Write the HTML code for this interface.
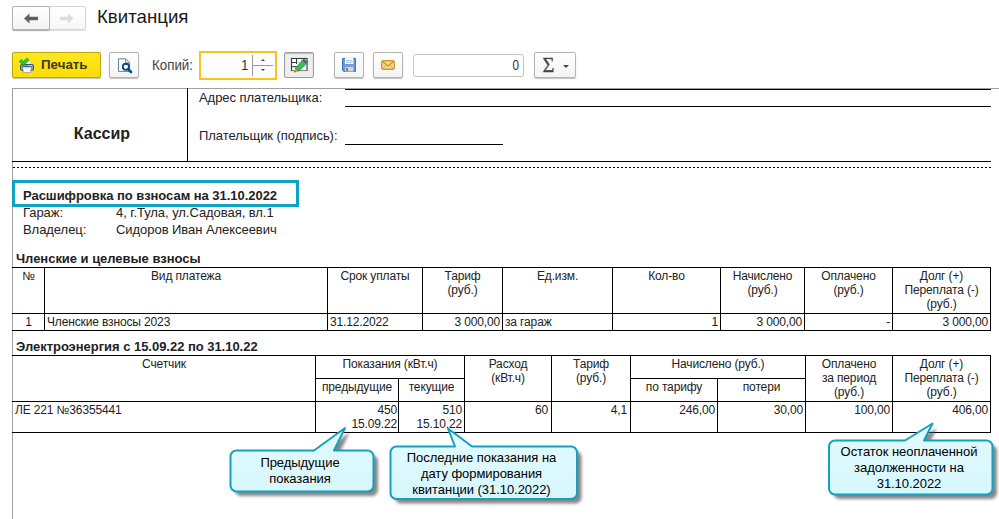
<!DOCTYPE html>
<html lang="ru">
<head>
<meta charset="utf-8">
<title>Квитанция</title>
<style>
*{box-sizing:border-box;margin:0;padding:0}
html,body{width:999px;height:519px;overflow:hidden;background:#fff}
body{position:relative;font-family:"Liberation Sans",Arial,sans-serif;color:#222;font-size:12px}
.abs{position:absolute}
.btn{position:absolute;border:1px solid #b4b4b4;border-radius:2px;background:linear-gradient(#ffffff,#f3f3f3);box-shadow:0 1px 1px rgba(0,0,0,.25)}
.title{position:absolute;left:97px;top:5px;font-size:18.67px;line-height:24px;color:#1a1a1a}
.t{position:absolute;white-space:nowrap;line-height:14px;font-size:12px;color:#222;letter-spacing:-0.14px}
.b{font-weight:bold}
.hl{position:absolute;background:#000;height:1px}
.vl{position:absolute;background:#000;width:1px}
.c{text-align:center}
.r{text-align:right}
.call{position:absolute;font-size:13px;line-height:16px;text-align:center;color:#000;letter-spacing:-0.05px}
</style>
</head>
<body>
<!-- nav buttons -->
<div class="btn" style="left:12px;top:6px;width:74px;height:24px;background:linear-gradient(#fff,#f7f7f7);border-color:#d4d4d4;box-shadow:0 1px 1px rgba(0,0,0,.12)"></div>
<div class="btn" style="left:12px;top:6px;width:38px;height:24px;"></div>
<svg class="abs" style="left:12px;top:6px" width="74" height="24" viewBox="0 0 74 24">
<path d="M12 12.5 L17.5 7.5 V10.8 H26 V14.2 H17.5 V17.5 Z" fill="#5f5f5f"/>
<path d="M61.5 12.5 L56 7.500 V10.8 H48 V14.2 H56 V17.5 Z" fill="#dcdcdc"/>
</svg>
<div class="title">Квитанция</div>

<!-- toolbar -->
<div class="btn" style="left:12px;top:52px;width:89px;height:26px;background:linear-gradient(#ffe720,#fbdc05);border-color:#bfa608"></div>
<svg class="abs" style="left:14px;top:52px" width="30" height="26" viewBox="14 52 30 26">
<path d="M25.800 64.500 V61.200 H29.300 L30.500 62.400 V64.500 Z" fill="#fff" stroke="#c9ccd6" stroke-width=".5"/>
<rect x="20.500" y="64.500" width="13" height="5.800" rx="1.300" fill="#7f9fcb" stroke="#34557f" stroke-width="1"/>
<path d="M22 66.300 H32" stroke="#3a557a" stroke-width=".9"/>
<rect x="28.800" y="65" width="1" height=".9" fill="#fff"/><rect x="31" y="65" width="1" height=".9" fill="#fff"/>
<rect x="23.300" y="67" width="7.400" height="5.400" fill="#fff"/>
<rect x="23.300" y="67" width="7.400" height="1.200" fill="#c3cdee"/>
<path d="M23.300 70.500 V72.400 H30.700 V70.500" fill="none" stroke="#6e87ad" stroke-width=".6"/>
<path d="M20 60.300 L23.800 63.300 L28 58.800" stroke="#1f9a14" stroke-width="3.400" fill="none" stroke-linejoin="miter"/>
<path d="M20 60.300 L23.800 63.300 L28 58.800" stroke="#35cf22" stroke-width="2" fill="none" stroke-linejoin="miter"/>
</svg>
<div class="t b" style="left:41px;top:57px;font-size:13.33px;line-height:16px;color:#3c3a1c;letter-spacing:0">Печать</div>

<div class="btn" style="left:109px;top:52px;width:30px;height:26px"></div>
<svg class="abs" style="left:114px;top:55px" width="22" height="20" viewBox="114 55 22 20">
<path d="M118.500 58.800 H125.500 L129.500 62.800 V71.400 H118.500 Z" fill="#fff" stroke="#5a8797" stroke-width="1"/>
<path d="M125.500 58.800 V62.800 H129.500" fill="none" stroke="#5a8797" stroke-width=".8"/>
<circle cx="125.900" cy="66.800" r="3.100" fill="#fff" stroke="#114b80" stroke-width="1.900"/>
<path d="M128.200 69.200 L131 72" stroke="#114b80" stroke-width="2.600" stroke-linecap="round"/>
</svg>

<div class="t" style="left:152px;top:57px;font-size:13.33px;line-height:16px;color:#444;letter-spacing:0;transform:translateY(.5px) scaleY(1.05)">Копий:</div>

<div class="abs" style="left:199px;top:51px;width:78px;height:29px;border:2px solid #f7c31c;background:#fff"></div>
<div class="t" style="left:236.500px;top:57px;width:12px;font-size:13.33px;line-height:16px;text-align:right;color:#333;letter-spacing:0;transform:translateY(.5px) scaleY(1.05)">1</div>
<div class="abs" style="left:252px;top:55px;width:1px;height:21px;background:#999"></div>
<div class="abs" style="left:253px;top:65px;width:20px;height:1px;background:#999"></div>
<svg class="abs" style="left:258px;top:57px" width="10" height="16" viewBox="0 0 10 16">
<path d="M3 4 L5 2 L7 4 Z M3 12 L5 14 L7 12 Z" fill="#444"/>
</svg>

<div class="btn" style="left:284px;top:52px;width:30px;height:26px;background:#eeeeee;border-color:#9c9c9c;box-shadow:inset 0 1px 1px rgba(0,0,0,.22)"></div>
<svg class="abs" style="left:282px;top:50px" width="36" height="30" viewBox="282 50 36 30">
<rect x="291.500" y="58.500" width="15.500" height="12" fill="#fff" stroke="#3a3a3a" stroke-width="1.100"/>
<path d="M292 62.500 H307 M292 66.500 H307 M301.500 59 V70" stroke="#c4c4c4" stroke-width=".8"/>
<path d="M291.500 62.500 H297 M291.500 66.700 H297 M296.500 58.500 V64" stroke="#3a3a3a" stroke-width="1"/>
<path d="M292 70.500 H307 M307 64 V70.500" stroke="#8a8a8a" stroke-width="1"/>
<path d="M294.100 72.600 L295 68.500 L298.500 71.300 Z" fill="#e8a33a"/>
<path d="M294.100 72.600 L294.700 70.800 L295.900 71.800 Z" fill="#444"/>
<path d="M295 68.500 L302.300 60.400 L306.200 63.700 L298.500 71.300 Z" fill="#3dbb55" stroke="#23803a" stroke-width=".6"/>
<path d="M302.300 60.400 L303.900 58.700 L307.800 62 L306.200 63.700 Z" fill="#566878" stroke="#3e4d5a" stroke-width=".4"/>
</svg>

<div class="btn" style="left:334px;top:52px;width:30px;height:26px"></div>
<svg class="abs" style="left:340px;top:56px" width="18" height="18" viewBox="340 56 18 18">
<path d="M342.600 58.400 H355.400 V71.400 H343.600 L342.600 70.400 Z" fill="#6f9ddb" stroke="#3c69a8" stroke-width="1"/>
<rect x="345" y="58" width="8.300" height="6" fill="#fff"/>
<path d="M346 60.400 H352.300 M346 62.300 H352.300" stroke="#8fb5e6" stroke-width=".9"/>
<rect x="345" y="66.700" width="8.600" height="5" fill="#d6d6d6" stroke="#7e93b5" stroke-width=".5"/>
<rect x="346.400" y="68" width="1.500" height="3.200" fill="#3c69a8"/>
</svg>

<div class="btn" style="left:373px;top:52px;width:30px;height:26px"></div>
<svg class="abs" style="left:379px;top:58px" width="18" height="14" viewBox="379 58 18 14">
<rect x="381.700" y="60.700" width="12.600" height="8.500" rx="1.500" fill="#f8d895" stroke="#d49a2e" stroke-width="1.400"/>
<path d="M382.500 61.500 L388 66 L393.500 61.500" stroke="#c98c22" stroke-width="1.100" fill="none"/>
<path d="M382.500 68.600 L386.400 64.800 M393.500 68.600 L389.600 64.800" stroke="#d9a441" stroke-width=".9" fill="none"/>
</svg>

<div class="abs" style="left:413px;top:54px;width:111px;height:23px;border:1px solid #c4c4c4;border-radius:3px;background:#fff"></div>
<div class="t" style="left:499.500px;top:57px;width:19px;font-size:13.33px;line-height:16px;text-align:right;color:#333;letter-spacing:0;transform-origin:right center;transform:translateY(.5px) scale(.88,1.05)">0</div>

<div class="btn" style="left:534px;top:52px;width:42px;height:26px"></div>
<div class="t" style="left:542.5px;top:53px;font-size:20.5px;line-height:24px;color:#444;-webkit-text-stroke:.3px #444;font-family:'Liberation Serif',serif">Σ</div>
<svg class="abs" style="left:562px;top:64px" width="8" height="5" viewBox="0 0 8 5"><path d="M1 1 H7 L4 4 Z" fill="#444"/></svg>

<!-- document frame -->
<div class="abs" style="left:12px;top:88px;width:987px;height:1px;background:#a0a0a0"></div>
<div class="abs" style="left:12px;top:88px;width:1px;height:431px;background:#a0a0a0"></div>

<!-- cashier block -->
<div class="vl" style="left:187px;top:88px;height:74px"></div>
<div class="hl" style="left:12px;top:161px;width:979px"></div>
<div class="abs" style="left:13px;top:167px;width:978px;height:1px;background:repeating-linear-gradient(90deg,#000 0,#000 2px,#fff 2px,#fff 4px)"></div>
<div class="t b" style="left:15px;top:124px;width:174px;text-align:center;font-size:16px;line-height:20px;color:#222;letter-spacing:0">Кассир</div>
<div class="t" style="left:199px;top:90px;font-size:13px;line-height:15px;letter-spacing:-0.05px">Адрес плательщика:</div>
<div class="t" style="left:199px;top:128px;font-size:13px;line-height:15px;letter-spacing:-0.05px">Плательщик (подпись):</div>
<div class="hl" style="left:345px;top:89px;width:646px"></div>
<div class="hl" style="left:345px;top:106px;width:646px"></div>
<div class="hl" style="left:345px;top:144px;width:158px"></div>

<!-- decode block -->
<div class="abs" style="left:12px;top:180px;width:287px;height:27px;border:3px solid #10a2c2"></div>
<div class="t b" style="left:23px;top:188px;font-size:13px;line-height:16px;letter-spacing:-0.04px">Расшифровка по взносам на 31.10.2022</div>
<div class="t" style="left:23px;top:205px;font-size:13px;line-height:16px;letter-spacing:-0.05px">Гараж:</div>
<div class="t" style="left:116px;top:205px;font-size:13px;line-height:16px;letter-spacing:-0.05px">4, г.Тула, ул.Садовая, вл.1</div>
<div class="t" style="left:23px;top:222px;font-size:13px;line-height:16px;letter-spacing:-0.05px">Владелец:</div>
<div class="t" style="left:116px;top:222px;font-size:13px;line-height:16px;letter-spacing:-0.05px">Сидоров Иван Алексеевич</div>

<div class="t b" style="left:16px;top:251px;font-size:13px;line-height:16px;letter-spacing:-0.03px">Членские и целевые взносы</div>

<!-- table 1 -->
<div class="hl" style="left:12px;top:267px;width:979px"></div>
<div class="hl" style="left:12px;top:313px;width:979px"></div>
<div class="hl" style="left:12px;top:330px;width:979px"></div>
<div class="vl" style="left:44px;top:267px;height:64px"></div>
<div class="vl" style="left:327px;top:267px;height:64px"></div>
<div class="vl" style="left:422px;top:267px;height:64px"></div>
<div class="vl" style="left:502px;top:267px;height:64px"></div>
<div class="vl" style="left:612px;top:267px;height:64px"></div>
<div class="vl" style="left:720px;top:267px;height:64px"></div>
<div class="vl" style="left:804px;top:267px;height:64px"></div>
<div class="vl" style="left:892px;top:267px;height:64px"></div>
<div class="vl" style="left:990px;top:267px;height:64px"></div>

<div class="t c" style="left:13px;top:269px;width:31px">№</div>
<div class="t c" style="left:45px;top:269px;width:282px">Вид платежа</div>
<div class="t c" style="left:328px;top:269px;width:94px">Срок уплаты</div>
<div class="t c" style="left:423px;top:269px;width:79px">Тариф<br>(руб.)</div>
<div class="t c" style="left:503px;top:269px;width:109px">Ед.изм.</div>
<div class="t c" style="left:613px;top:269px;width:107px">Кол-во</div>
<div class="t c" style="left:721px;top:269px;width:83px">Начислено<br>(руб.)</div>
<div class="t c" style="left:805px;top:269px;width:87px">Оплачено<br>(руб.)</div>
<div class="t c" style="left:893px;top:269px;width:97px">Долг (+)<br>Переплата (-)<br>(руб.)</div>

<div class="t c" style="left:13px;top:315px;width:31px">1</div>
<div class="t" style="left:47px;top:315px">Членские взносы 2023</div>
<div class="t" style="left:330px;top:315px">31.12.2022</div>
<div class="t r" style="left:423px;top:315px;width:77px">3 000,00</div>
<div class="t" style="left:505px;top:315px">за гараж</div>
<div class="t r" style="left:613px;top:315px;width:105px">1</div>
<div class="t r" style="left:721px;top:315px;width:81px">3 000,00</div>
<div class="t r" style="left:805px;top:315px;width:85px">-</div>
<div class="t r" style="left:893px;top:315px;width:95px">3 000,00</div>

<div class="t b" style="left:16px;top:339px;font-size:13px;line-height:16px;letter-spacing:-0.03px">Электроэнергия с 15.09.22 по 31.10.22</div>

<!-- table 2 -->
<div class="hl" style="left:12px;top:355px;width:979px"></div>
<div class="hl" style="left:12px;top:401px;width:979px"></div>
<div class="hl" style="left:12px;top:432px;width:979px"></div>
<div class="hl" style="left:315px;top:378px;width:150px"></div>
<div class="hl" style="left:630px;top:378px;width:176px"></div>
<div class="vl" style="left:315px;top:355px;height:78px"></div>
<div class="vl" style="left:398px;top:378px;height:55px"></div>
<div class="vl" style="left:464px;top:355px;height:78px"></div>
<div class="vl" style="left:551px;top:355px;height:78px"></div>
<div class="vl" style="left:630px;top:355px;height:78px"></div>
<div class="vl" style="left:717px;top:378px;height:55px"></div>
<div class="vl" style="left:805px;top:355px;height:78px"></div>
<div class="vl" style="left:892px;top:355px;height:78px"></div>
<div class="vl" style="left:990px;top:355px;height:78px"></div>

<div class="t c" style="left:13px;top:357px;width:302px">Счетчик</div>
<div class="t c" style="left:316px;top:357px;width:148px">Показания (кВт.ч)</div>
<div class="t c" style="left:316px;top:380px;width:82px">предыдущие</div>
<div class="t c" style="left:399px;top:380px;width:65px">текущие</div>
<div class="t c" style="left:465px;top:357px;width:86px">Расход<br>(кВт.ч)</div>
<div class="t c" style="left:552px;top:357px;width:78px">Тариф<br>(руб.)</div>
<div class="t c" style="left:631px;top:357px;width:174px">Начислено (руб.)</div>
<div class="t c" style="left:631px;top:380px;width:86px">по тарифу</div>
<div class="t c" style="left:718px;top:380px;width:87px">потери</div>
<div class="t c" style="left:806px;top:357px;width:86px">Оплачено<br>за период<br>(руб.)</div>
<div class="t c" style="left:893px;top:357px;width:97px">Долг (+)<br>Переплата (-)<br>(руб.)</div>

<div class="t" style="left:15px;top:403px">ЛЕ 221 №36355441</div>
<div class="t r" style="left:316px;top:403px;width:81px">450<br>15.09.22</div>
<div class="t r" style="left:399px;top:403px;width:63px">510<br>15.10.22</div>
<div class="t r" style="left:465px;top:403px;width:83px">60</div>
<div class="t r" style="left:552px;top:403px;width:75px">4,1</div>
<div class="t r" style="left:631px;top:403px;width:84px">246,00</div>
<div class="t r" style="left:718px;top:403px;width:85px">30,00</div>
<div class="t r" style="left:806px;top:403px;width:84px">100,00</div>
<div class="t r" style="left:893px;top:403px;width:95px">406,00</div>

<!-- callouts -->
<svg class="abs" style="left:0;top:415px" width="999" height="104" viewBox="0 415 999 104">
<defs>
<linearGradient id="cg" x1="0" y1="0" x2="0" y2="1"><stop offset="0" stop-color="#e3fbff"/><stop offset="1" stop-color="#d6f7fd"/></linearGradient>
<filter id="sh" x="-10%" y="-20%" width="125%" height="150%"><feGaussianBlur stdDeviation="1.400"/></filter>
</defs>
<g fill="#555" opacity=".7" filter="url(#sh)" transform="translate(4.500,4.500)">
<path d="M236.500 450.500 H314 L345 428 L334 450.500 H367.500 a6 6 0 0 1 6 6 V485.500 a6 6 0 0 1 -6 6 H236.500 a6 6 0 0 1 -6 -6 V456.500 a6 6 0 0 1 6 -6 Z"/>
<path d="M396.500 446.500 H455 L448 428.500 L472 446.500 H571 a6 6 0 0 1 6 6 V493 a6 6 0 0 1 -6 6 H396.500 a6 6 0 0 1 -6 -6 V452.500 a6 6 0 0 1 6 -6 Z"/>
<path d="M835 440.500 H905 L932.500 423.500 L924 440.500 H986.500 a6 6 0 0 1 6 6 V488.500 a6 6 0 0 1 -6 6 H835 a6 6 0 0 1 -6 -6 V446.500 a6 6 0 0 1 6 -6 Z"/>
</g>
<g fill="url(#cg)" stroke="#13a0c1" stroke-width="2" stroke-linejoin="round">
<path d="M236.500 450.500 H314 L345 428 L334 450.500 H367.500 a6 6 0 0 1 6 6 V485.500 a6 6 0 0 1 -6 6 H236.500 a6 6 0 0 1 -6 -6 V456.500 a6 6 0 0 1 6 -6 Z"/>
<path d="M396.500 446.500 H455 L448 428.500 L472 446.500 H571 a6 6 0 0 1 6 6 V493 a6 6 0 0 1 -6 6 H396.500 a6 6 0 0 1 -6 -6 V452.500 a6 6 0 0 1 6 -6 Z"/>
<path d="M835 440.500 H905 L932.500 423.500 L924 440.500 H986.500 a6 6 0 0 1 6 6 V488.500 a6 6 0 0 1 -6 6 H835 a6 6 0 0 1 -6 -6 V446.500 a6 6 0 0 1 6 -6 Z"/>
</g>
</svg>
<div class="call" style="left:228px;top:455px;width:144px">Предыдущие<br>показания</div>
<div class="call" style="left:388px;top:450px;width:187px">Последние показания на<br>дату формирования<br>квитанции (31.10.2022)</div>
<div class="call" style="left:827px;top:444px;width:164px">Остаток неоплаченной<br>задолженности на<br>31.10.2022</div>
</body>
</html>
